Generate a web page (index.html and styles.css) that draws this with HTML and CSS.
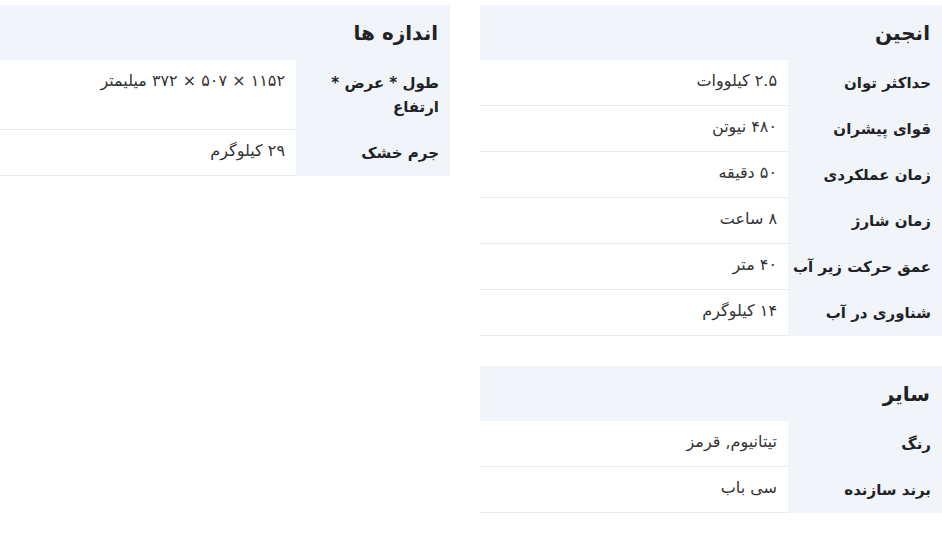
FILE: index.html
```html
<!DOCTYPE html>
<html lang="fa" dir="rtl">
<head>
<meta charset="utf-8">
<title>مشخصات</title>
<link rel="stylesheet" href="styles.css">
</head>
<body>
<div class="specs">
  <div class="col">
    <section class="group">
      <h3 class="group-title">انجین</h3>
      <div class="row"><div class="label">حداکثر توان</div><div class="value">۲.۵ کیلووات</div></div>
      <div class="row"><div class="label">قوای پیشران</div><div class="value">۴۸۰ نیوتن</div></div>
      <div class="row"><div class="label">زمان عملکردی</div><div class="value">۵۰ دقیقه</div></div>
      <div class="row"><div class="label">زمان شارژ</div><div class="value">۸ ساعت</div></div>
      <div class="row"><div class="label">عمق حرکت زیر آب</div><div class="value">۴۰ متر</div></div>
      <div class="row"><div class="label">شناوری در آب</div><div class="value">۱۴ کیلوگرم</div></div>
    </section>
    <section class="group">
      <h3 class="group-title">سایر</h3>
      <div class="row"><div class="label">رنگ</div><div class="value">تیتانیوم, قرمز</div></div>
      <div class="row"><div class="label">برند سازنده</div><div class="value">سی باب</div></div>
    </section>
  </div>
  <div class="col">
    <section class="group">
      <h3 class="group-title">اندازه ها</h3>
      <div class="row"><div class="label">طول * عرض * ارتفاع</div><div class="value">۱۱۵۲ × ۵۰۷ × ۳۷۲ میلیمتر</div></div>
      <div class="row"><div class="label">جرم خشک</div><div class="value">۲۹ کیلوگرم</div></div>
    </section>
  </div>
</div>
</body>
</html>
```
FILE: styles.css
```css
html, body {
  margin: 0;
  padding: 0;
  background: #ffffff;
}
body {
  font-family: "DejaVu Sans", "Noto Sans", sans-serif;
  color: #222;
  overflow: hidden;
}
.specs {
  display: grid;
  grid-template-columns: 462px 462px;
  column-gap: 30px;
  justify-content: start;
  padding-top: 5px;
  width: 954px;
}
.col {
  display: flex;
  flex-direction: column;
  gap: 30px;
}
.group-title {
  margin: 0;
  height: 55px;
  box-sizing: border-box;
  padding: 0 12px;
  display: flex;
  align-items: center;
  background: #f1f4f9;
  font-size: 20px;
  font-weight: bold;
  color: #1f2226;
}
.row {
  display: grid;
  grid-template-columns: 154px 1fr;
}
.label {
  background: #f1f4f9;
  padding: 11px 11px 11px 1px;
  font-size: 15px;
  font-weight: bold;
  line-height: 24px;
  color: #1f2226;
}
.value {
  background: #fff;
  padding: 9px 11px 12px;
  border-bottom: 1px solid #e9ecef;
  font-size: 16px;
  line-height: 24px;
  color: #333;
}
```
